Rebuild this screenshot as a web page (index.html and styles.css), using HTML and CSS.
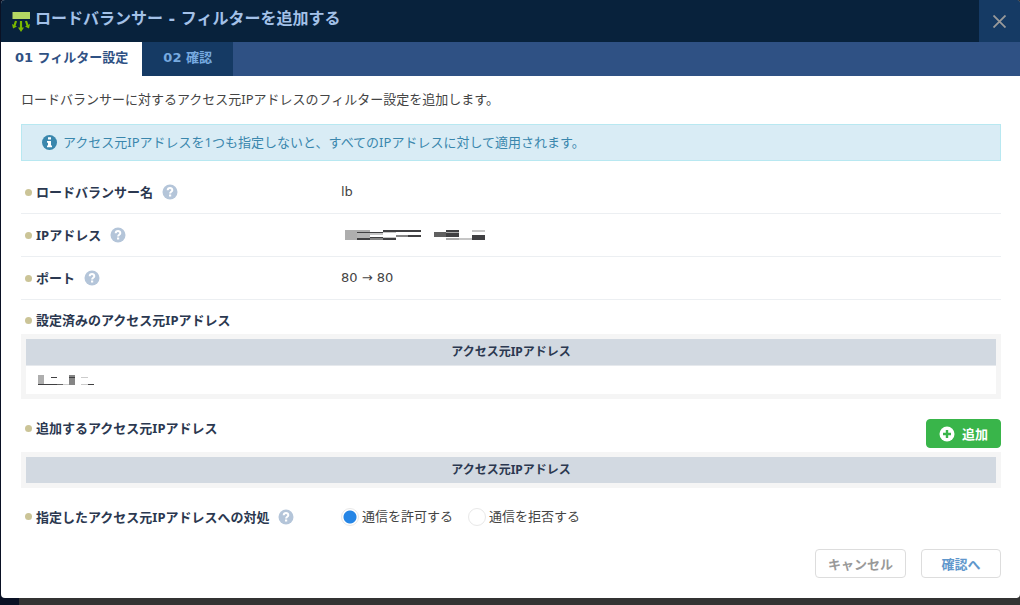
FILE: index.html
```html
<!DOCTYPE html>
<html lang="ja">
<head>
<meta charset="utf-8">
<meta name="viewport" content="width=device-width, initial-scale=1">
<title>ロードバランサー - フィルターを追加する</title>
<link rel="stylesheet" href="styles.css">
</head>
<body>
<svg class="defs" width="0" height="0" aria-hidden="true">
  <symbol id="help" viewBox="0 0 16 16">
    <circle cx="8" cy="8" r="7.5" fill="#b4c5d9"/>
    <path d="M5.7 6.2C5.8 3.4 10.4 3.4 10.3 6.2C10.2 7.7 8.1 7.8 8.1 9.4" fill="none" stroke="#fff" stroke-width="2"/>
    <rect x="7" y="10.5" width="2.2" height="2" fill="#fff"/>
  </symbol>
</svg>
<main class="modal">
  <header class="modal-header">
    <svg class="logo" width="20" height="22" viewBox="0 0 20 22" aria-hidden="true">
      <rect x="1.500" y="2" width="17.500" height="7" fill="#b4d763"/>
      <g fill="none" stroke="#7ab800" stroke-width="2.200">
        <path d="M5 11L3 17"/><path d="M10 11V20"/><path d="M15 11L17 17"/>
      </g>
      <path d="M1 14L2 18.500L6 16.500ZM7 17.500H13L10 22ZM19 14L18 18.500L14 16.500Z" fill="#7ab800"/>
    </svg>
    <h1 class="title">ロードバランサー - フィルターを追加する</h1>
    <button class="close" type="button" aria-label="閉じる">
      <svg width="13" height="13" viewBox="0 0 13 13" aria-hidden="true"><path d="M.5 .5L12.500 12.500M12.500 .5L.5 12.500" stroke="#9a9a9a" stroke-width="1.800"/></svg>
    </button>
  </header>
  <nav class="tabs">
    <a class="tab tab-active" href="#filter">01 フィルター設定</a>
    <a class="tab" href="#confirm">02 確認</a>
  </nav>
  <form class="content" id="filter">
    <p class="lead">ロードバランサーに対するアクセス元IPアドレスのフィルター設定を追加します。</p>
    <p class="notice">
      <svg width="15" height="15" viewBox="0 0 15 15" aria-hidden="true"><circle cx="7.500" cy="7.500" r="7.500" fill="#3a87ad"/><path d="M6 2.300h3v2.200H6zM5 6h4v4.500h1v1.800H5v-1.800h1V7.800H5z" fill="#fff"/></svg>
      <span>アクセス元IPアドレスを1つも指定しないと、すべてのIPアドレスに対して適用されます。</span>
    </p>
    <dl class="fields">
      <div class="field">
        <dt class="label">ロードバランサー名<svg class="help" role="img" aria-label="ヘルプ"><use href="#help"/></svg></dt>
        <dd class="value">lb</dd>
      </div>
      <div class="field">
        <dt class="label">IPアドレス<svg class="help" role="img" aria-label="ヘルプ"><use href="#help"/></svg></dt>
        <dd class="value">
          <svg class="mask" width="146" height="10" viewBox="1 0 146 10" shape-rendering="crispEdges" aria-hidden="true">
            <path d="M5 0h25v2H17v6H30v0H17v2H5z" fill="#aeaeae"/>
            <path d="M17 2h13v6H17z" fill="#b4b4b4"/>
            <path d="M30 3h13v2H30zM43 2h13v1H43zM43 7h13v1H43z" fill="#c6c6c6"/>
            <path d="M30 5h13v2H30z" fill="#fff"/>
            <path d="M43 0h38v2H43zM17 2h26v1H17zM68 5h13v2H68zM17 8h13v2H17zM30 7h13v1H30zM43 8h13v2H43z" fill="#404042"/>
            <path d="M56 5h12v2H56zM30 8h13v2H30z" fill="#858585"/>
            <path d="M94 2h12v5H94z" fill="#606060"/>
            <path d="M106 0h13v2h-13zM106 3h13v4h-13zM132 5h13v5h-13z" fill="#404042"/>
            <path d="M106 2h13v1h-13zM106 8h13v2h-13z" fill="#aaa"/>
            <path d="M119 8h13v2h-13zM132 0h13v2h-13z" fill="#c6c6c6"/>
          </svg>
        </dd>
      </div>
      <div class="field">
        <dt class="label">ポート<svg class="help" role="img" aria-label="ヘルプ"><use href="#help"/></svg></dt>
        <dd class="value">80 → 80</dd>
      </div>
    </dl>
    <section class="group">
      <h2 class="label">設定済みのアクセス元IPアドレス</h2>
      <table class="grid">
        <thead><tr><th scope="col">アクセス元IPアドレス</th></tr></thead>
        <tbody><tr><td>
          <svg class="mask" width="57" height="10" viewBox="0 0 57 10" shape-rendering="crispEdges" aria-hidden="true">
            <path d="M0 0h6v9H0z" fill="#aeaeae"/><path d="M31 0h6v10h-6z" fill="#858585"/>
            <path d="M0 9h19v1H0zM13 2h6v1h-6zM31 2h6v1h-6zM50 9h6v1h-6z" fill="#404042"/>
            <path d="M19 9h6v1h-6z" fill="#666"/><path d="M25 9h6v1h-6zM43 2h7v1h-7zM43 9h7v1h-7z" fill="#ccc"/>
          </svg>
        </td></tr></tbody>
      </table>
    </section>
    <section class="group group-add">
      <div class="group-head">
        <h2 class="label">追加するアクセス元IPアドレス</h2>
        <button class="btn btn-add" type="button">
          <svg width="16" height="16" viewBox="0 0 16 16" aria-hidden="true"><circle cx="8" cy="8" r="7.500" fill="#fff"/><path d="M8 4v8M4 8h8" stroke="#39b54a" stroke-width="2.400"/></svg>
          追加
        </button>
      </div>
      <table class="grid">
        <thead><tr><th scope="col">アクセス元IPアドレス</th></tr></thead>
      </table>
    </section>
    <div class="field field-policy" role="radiogroup" aria-labelledby="policy">
      <div class="label"><span id="policy">指定したアクセス元IPアドレスへの対処</span><svg class="help" role="img" aria-label="ヘルプ"><use href="#help"/></svg></div>
      <div class="value choices">
        <label class="choice"><input type="radio" name="policy" checked>通信を許可する</label>
        <label class="choice"><input type="radio" name="policy">通信を拒否する</label>
      </div>
    </div>
    <footer class="actions">
      <button class="btn btn-cancel" type="button">キャンセル</button>
      <button class="btn btn-next" type="submit">確認へ</button>
    </footer>
  </form>
</main>
</body>
</html>
```

FILE: styles.css
```css
* {
  box-sizing: border-box;
}

body {
  margin: 0;
  padding: 0 0 7px 1px;
  min-height: 100vh;
  background: linear-gradient(90deg, #0a1124 19px, #333 19px);
  color: #444;
  font: 13px/20px "Noto Sans", "Noto Sans CJK JP", sans-serif;
}

h1,
h2,
p,
dl,
dd {
  margin: 0;
}

svg {
  flex: none;
}

button {
  font: inherit;
  cursor: pointer;
}

.defs {
  position: absolute;
}

.modal {
  background: #fff;
  border-radius: 4px;
  overflow: hidden;
}

.modal-header {
  display: flex;
  align-items: center;
  gap: 4px;
  height: 42px;
  padding-left: 10px;
  background: #08223c;
}

.title,
.tab,
.value {
  font-family: "DejaVu Sans", "Noto Sans CJK JP", sans-serif;
}

.title {
  flex: 1;
  color: #a3c1e8;
  font-size: 16px;
  line-height: 24px;
  padding-bottom: 4px;
}

.close {
  display: grid;
  place-items: center;
  align-self: stretch;
  width: 41px;
  padding: 0;
  border: 0;
  background: #153a64;
}

.tabs {
  display: flex;
  background: #2f5184;
}

.tab {
  padding: 6px 21px 8px;
  background: #153a64;
  color: #77aae0;
  font-weight: bold;
  text-decoration: none;
}

.tab-active {
  padding: 6px 14px 8px;
  background: #fff;
  color: #2f5184;
}

.content {
  padding: 13px 19px 20px 20px;
}

.notice {
  display: flex;
  align-items: center;
  gap: 6px;
  margin-top: 15px;
  padding: 7px 20px 8px;
  border: 1px solid #b8e8f1;
  background: #d9ecf5;
  color: #3a87ad;
}

.fields {
  padding-top: 10px;
}

.field {
  display: grid;
  grid-template-columns: 320px 1fr;
  align-items: center;
  min-height: 43px;
}

.fields .field {
  border-bottom: 1px solid #eceff2;
}

.label {
  display: flex;
  align-items: center;
  padding-left: 4px;
  color: #2b3850;
  font-size: 13px;
  font-weight: bold;
}

.label::before {
  content: "";
  width: 7px;
  height: 7px;
  margin-right: 4px;
  border-radius: 50%;
  background: #cbc497;
}

.help {
  width: 16px;
  height: 16px;
  margin-left: 9px;
}

.mask {
  display: block;
}

.group {
  padding-top: 11px;
}

.group .label {
  line-height: 18px;
}

.group-add {
  padding-top: 20px;
}

.group-head {
  display: flex;
  justify-content: space-between;
  align-items: flex-start;
  padding-bottom: 4px;
}

.grid {
  width: 100%;
  margin-top: 5px;
  border: 5px solid #f5f5f5;
  border-spacing: 0;
}

.group-head + .grid {
  margin-top: 0;
}

.grid th {
  padding: 3px 10px;
  background: #d2d9e1;
  color: #2b3850;
  font-size: 12px;
}

.grid td {
  height: 29px;
  padding: 0 12px;
  border-top: 1px solid #e6e9ed;
}

.btn {
  height: 29px;
  padding: 0;
  border: 1px solid #ddd;
  border-radius: 4px;
  background: #fff;
  font-weight: bold;
}

.btn-add {
  display: flex;
  align-items: center;
  justify-content: center;
  gap: 7px;
  width: 75px;
  border-color: #39b54a;
  background: #39b54a;
  color: #fff;
}

.field-policy {
  margin-top: 7px;
}

.choices {
  display: flex;
  gap: 15px;
}

.choice {
  display: flex;
  align-items: center;
  gap: 3px;
}

.choice input {
  appearance: none;
  width: 18px;
  height: 18px;
  margin: 0;
  border: 1px solid #e8e8e8;
  border-radius: 50%;
  background: #fff;
}

.choice input:checked {
  background: radial-gradient(circle, #2585e5 6px, #fff 7px);
}

.actions {
  display: flex;
  justify-content: flex-end;
  gap: 15px;
  margin-top: 11px;
}

.btn-cancel {
  width: 91px;
  color: #999;
}

.btn-next {
  width: 80px;
  color: #5f97cc;
}
```
